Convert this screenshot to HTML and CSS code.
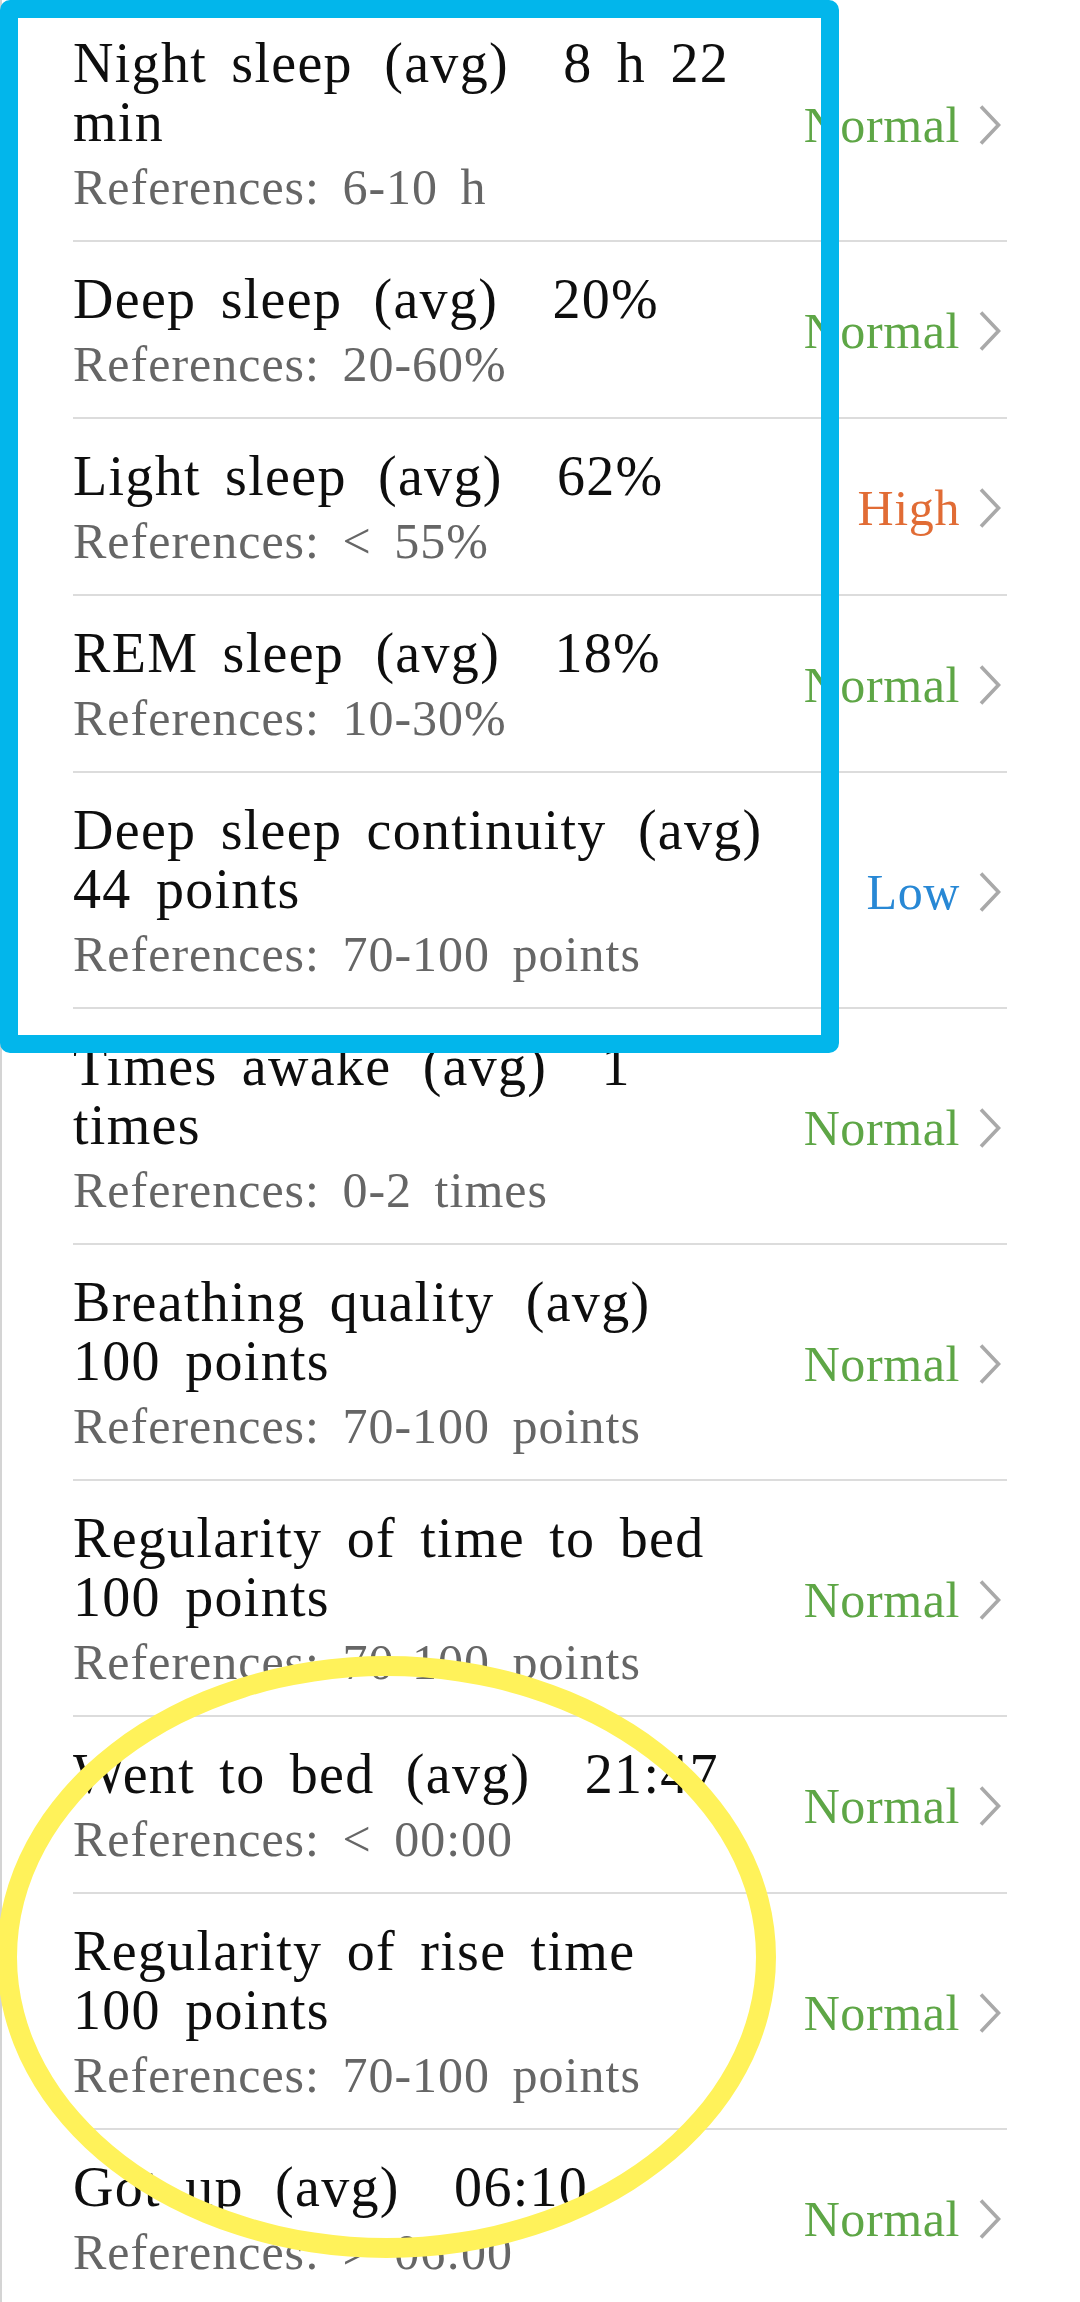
FILE: index.html
```html
<!DOCTYPE html>
<html lang="en">
<head>
<meta charset="utf-8">
<title>Sleep report</title>
<link rel="stylesheet" href="styles.css">
</head>
<body>
<div class="page">
  <ul class="list">
    <li class="row">
      <div class="info">
        <div class="title">Night sleep <span class="paren">(avg)</span> <span class="val">8 h 22<br>min</span></div>
        <div class="ref">References: 6-10 h</div>
      </div>
      <div class="status normal">Normal<svg viewBox="0 0 28 44"><path d="M5 3.5 L22.5 22 L5 40.5"/></svg></div>
    </li>
    <li class="row">
      <div class="info">
        <div class="title">Deep sleep <span class="paren">(avg)</span> <span class="val">20%</span></div>
        <div class="ref">References: 20-60%</div>
      </div>
      <div class="status normal">Normal<svg viewBox="0 0 28 44"><path d="M5 3.5 L22.5 22 L5 40.5"/></svg></div>
    </li>
    <li class="row">
      <div class="info">
        <div class="title">Light sleep <span class="paren">(avg)</span> <span class="val">62%</span></div>
        <div class="ref">References: &lt; 55%</div>
      </div>
      <div class="status high">High<svg viewBox="0 0 28 44"><path d="M5 3.5 L22.5 22 L5 40.5"/></svg></div>
    </li>
    <li class="row">
      <div class="info">
        <div class="title">REM sleep <span class="paren">(avg)</span> <span class="val">18%</span></div>
        <div class="ref">References: 10-30%</div>
      </div>
      <div class="status normal">Normal<svg viewBox="0 0 28 44"><path d="M5 3.5 L22.5 22 L5 40.5"/></svg></div>
    </li>
    <li class="row">
      <div class="info">
        <div class="title">Deep sleep continuity <span class="paren">(avg)</span><br>44 points</div>
        <div class="ref">References: 70-100 points</div>
      </div>
      <div class="status low">Low<svg viewBox="0 0 28 44"><path d="M5 3.5 L22.5 22 L5 40.5"/></svg></div>
    </li>
    <li class="row">
      <div class="info">
        <div class="title">Times awake <span class="paren">(avg)</span> <span class="val">1<br>times</span></div>
        <div class="ref">References: 0-2 times</div>
      </div>
      <div class="status normal">Normal<svg viewBox="0 0 28 44"><path d="M5 3.5 L22.5 22 L5 40.5"/></svg></div>
    </li>
    <li class="row">
      <div class="info">
        <div class="title">Breathing quality <span class="paren">(avg)</span><br>100 points</div>
        <div class="ref">References: 70-100 points</div>
      </div>
      <div class="status normal">Normal<svg viewBox="0 0 28 44"><path d="M5 3.5 L22.5 22 L5 40.5"/></svg></div>
    </li>
    <li class="row">
      <div class="info">
        <div class="title">Regularity of time to bed<br>100 points</div>
        <div class="ref">References: 70-100 points</div>
      </div>
      <div class="status normal">Normal<svg viewBox="0 0 28 44"><path d="M5 3.5 L22.5 22 L5 40.5"/></svg></div>
    </li>
    <li class="row">
      <div class="info">
        <div class="title">Went to bed <span class="paren">(avg)</span> <span class="val">21:47</span></div>
        <div class="ref">References: &lt; 00:00</div>
      </div>
      <div class="status normal">Normal<svg viewBox="0 0 28 44"><path d="M5 3.5 L22.5 22 L5 40.5"/></svg></div>
    </li>
    <li class="row">
      <div class="info">
        <div class="title">Regularity of rise time<br>100 points</div>
        <div class="ref">References: 70-100 points</div>
      </div>
      <div class="status normal">Normal<svg viewBox="0 0 28 44"><path d="M5 3.5 L22.5 22 L5 40.5"/></svg></div>
    </li>
    <li class="row">
      <div class="info">
        <div class="title">Got up <span class="paren">(avg)</span> <span class="val">06:10</span></div>
        <div class="ref">References: &gt; 06:00</div>
      </div>
      <div class="status normal">Normal<svg viewBox="0 0 28 44"><path d="M5 3.5 L22.5 22 L5 40.5"/></svg></div>
    </li>
  </ul>
</div>
<div class="mark-box"></div>
<div class="mark-ring"></div>
</body>
</html>
```
FILE: styles.css
```css
html, body {
  margin: 0;
  padding: 0;
  background: #ffffff;
}

body {
  position: relative;
  font-family: "Liberation Serif", "Times New Roman", serif;
  overflow: hidden;
  height: 2302px;
}

.page {
  border-left: 2px solid #d4d4d4;
  padding-top: 6px;
  min-height: 2302px;
  box-sizing: border-box;
}

.list {
  list-style: none;
  margin: 0;
  padding: 0 73px 0 71px;
}

.row {
  display: flex;
  align-items: center;
  padding: 28px 3px 25px 0;
  border-bottom: 2px solid #dcdcdc;
}

.info {
  flex: 1;
  min-width: 0;
}

.title {
  font-size: 56px;
  line-height: 59px;
  letter-spacing: 1.3px;
  word-spacing: 9px;
  color: #0e0e0e;
  white-space: nowrap;
}

.paren {
  margin-left: 7px;
}

.val {
  margin-left: 30px;
}

.ref {
  margin-top: 7px;
  font-size: 50px;
  line-height: 56px;
  letter-spacing: 1px;
  word-spacing: 9px;
  color: #666666;
  white-space: nowrap;
}

.status {
  flex: none;
  display: flex;
  align-items: center;
  font-size: 50px;
  line-height: 56px;
  letter-spacing: 0.6px;
}

.status svg {
  width: 28px;
  height: 44px;
  margin-left: 16px;
  fill: none;
  stroke: #a9a9a9;
  stroke-width: 3.6;
}

.normal { color: #5ea646; }
.high { color: #e16c35; }
.low { color: #2888d5; }

.mark-box {
  position: absolute;
  left: 0;
  top: 0;
  width: 839px;
  height: 1053px;
  box-sizing: border-box;
  border: 18px solid #02b6eb;
  border-radius: 10px;
}

.mark-ring {
  position: absolute;
  left: -3px;
  top: 1656px;
  width: 779px;
  height: 602px;
  box-sizing: border-box;
  border: 20px solid #fff25a;
  border-radius: 50%;
}
```
